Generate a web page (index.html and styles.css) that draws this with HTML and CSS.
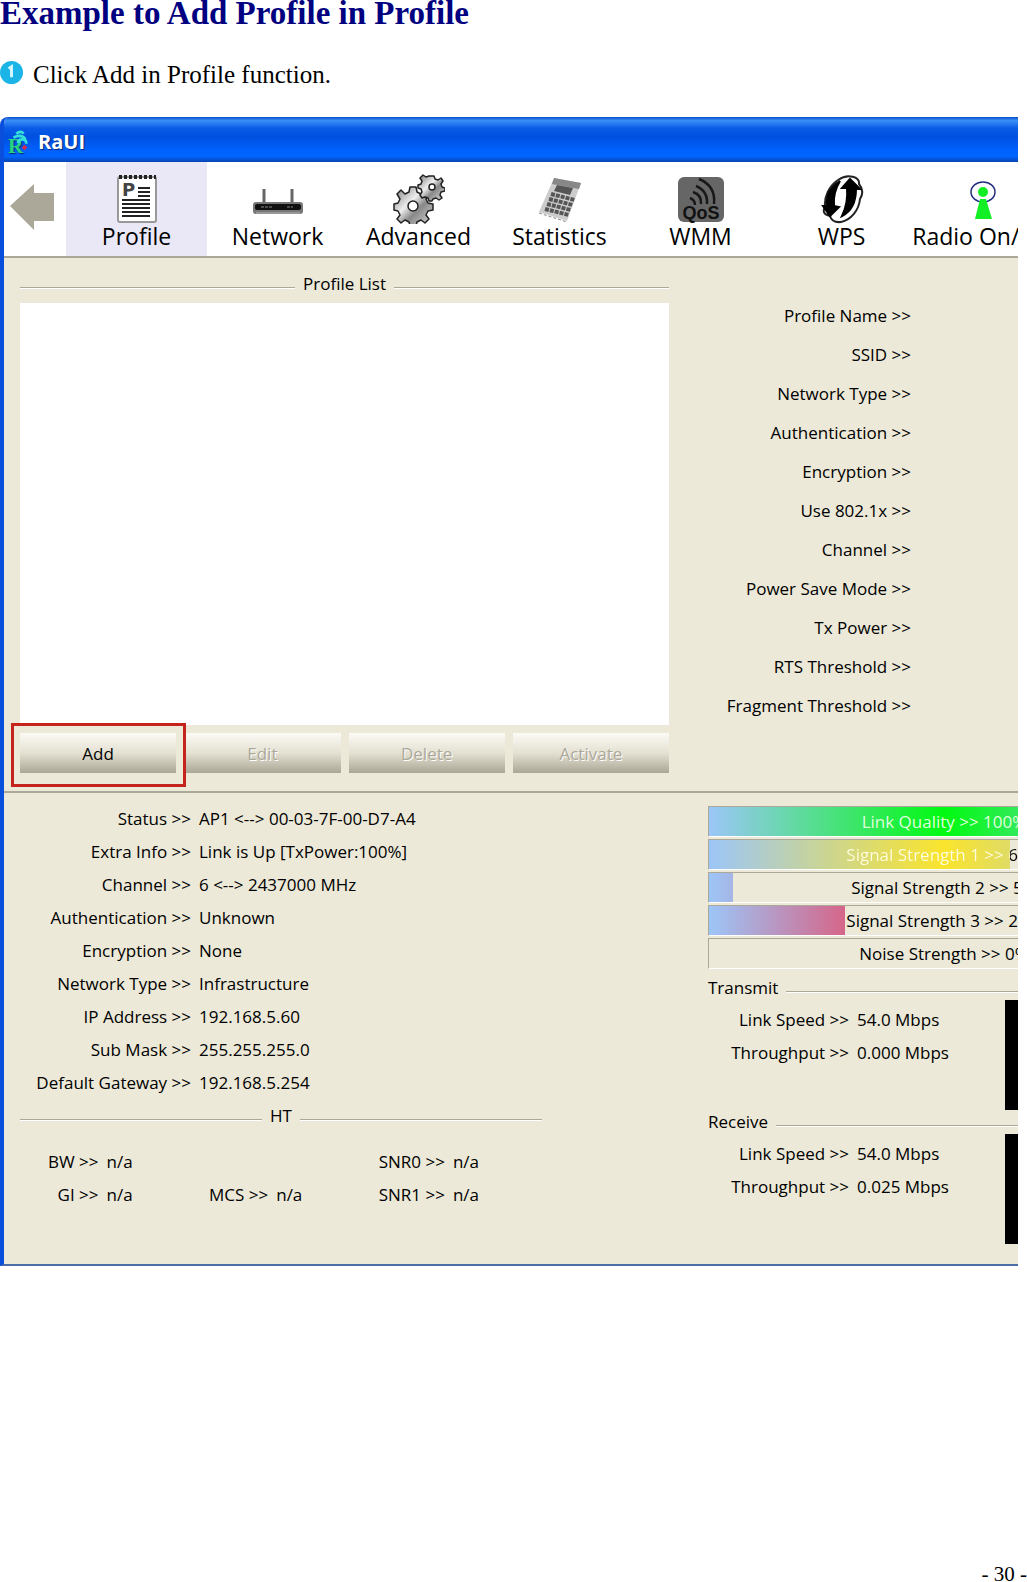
FILE: index.html
```html
<!DOCTYPE html>
<html lang="en">
<head>
  <meta charset="utf-8" />
  <meta name="viewport" content="width=device-width, initial-scale=1.0"/>
  <title>Example to Add Profile in Profile</title>
  <link rel="stylesheet" href="styles.css">
</head>
<body>

  <h1>Example to Add Profile in Profile</h1>

  <p class="step">
    <svg class="step-num" viewBox="0 0 24 24" aria-hidden="true">
      <circle cx="12" cy="12" r="12" fill="#1bb4e6"/>
      <path d="M9 8l3-2v11" fill="none" stroke="#d8f6ff" stroke-width="3"/>
    </svg>
    <span>Click Add in Profile function.</span>
  </p>

  <main class="window">
    <div class="titlebar">
      <svg class="logo" viewBox="0 0 24 26" aria-hidden="true">
        <text x="0" y="25" font-family="Liberation Serif, serif" font-weight="bold" font-size="23" fill="#28d484">R</text>
        <path d="M9 4q5-4 8 0M6 8q9-4 13 2M11 14q0-4 5-4 4 0 4 5" fill="none" stroke="#35e0d8" stroke-width="3"/>
        <path d="M15 19l3-3 3 3-3 3z" fill="#d62a4c"/>
      </svg>
      <span>RaUI</span>
    </div>

    <!-- Toolbar -->
    <nav class="toolbar">
      <button class="back" aria-label="Back">
        <svg width="44" height="46" viewBox="0 0 44 46"><path d="M0 22L24 0v9h20v28H24v9z" fill="#aca899"/></svg>
      </button>
      <button class="tab active">
        <svg viewBox="0 0 52 52" aria-hidden="true">
          <rect x="7" y="5" width="38" height="45" rx="2" fill="#fff" stroke="#999" stroke-width="2"/>
          <path d="M8 5h37" stroke="#222" stroke-width="4" stroke-dasharray="3 2"/>
          <text x="11" y="24" font-family="DejaVu Sans, sans-serif" font-weight="bold" font-size="18" fill="#444">P</text>
          <path d="M27 16h12M27 20h12M27 24h12M11 28h28M11 32h28M11 36h28M11 40h28M11 44h28" stroke="#222" stroke-width="2"/>
        </svg>
        <span>Profile</span>
      </button>
      <button class="tab">
        <svg viewBox="0 0 52 52" aria-hidden="true">
          <path d="M12 17v16M40 17v16" stroke="#666" stroke-width="3"/>
          <rect x="1" y="30" width="50" height="12" rx="3" fill="#777"/>
          <rect x="3" y="32" width="46" height="6" rx="2" fill="#111"/>
          <path d="M9 35h12M35 35h6" stroke="#888" stroke-width="1" stroke-dasharray="3 1"/>
          <path d="M4 41h44" stroke="#bbb"/>
        </svg>
        <span>Network</span>
      </button>
      <button class="tab">
        <svg viewBox="0 0 52 52" aria-hidden="true">
          <defs>
            <linearGradient id="steel" x1="0" y1="0" x2="1" y2="1">
              <stop offset="0" stop-color="#777"/><stop offset=".4" stop-color="#eee"/>
              <stop offset=".6" stop-color="#888"/><stop offset="1" stop-color="#ddd"/>
            </linearGradient>
          </defs>
          <g stroke="#222" stroke-width="1.5" fill="url(#steel)" stroke-linejoin="round">
            <path d="M17 15h6l1 5 4 2 4-4 4 4-3 5 2 4 5 1v6l-5 1-2 4 3 4-4 4-4-3-4 2-1 4h-6l-1-4-4-2-4 3-4-4 3-4-2-4-4-1v-6l4-1 2-4-3-5 4-4 4 4 4-2z"/>
            <circle cx="20" cy="34" r="5" fill="#fff"/>
            <path d="M37 4h4l1 3 3 1 3-2 2 3-2 3 1 3 3 1v3l-4 1-1 3 2 3-3 2-3-2-3 1-1 2h-3l-1-3-3-1-3 1-2-3 2-3-1-3-3-1v-3l3-1 1-3-2-3 3-3 3 2 3-1z"/>
            <circle cx="39" cy="15" r="3" fill="#fff"/>
          </g>
        </svg>
        <span>Advanced</span>
      </button>
      <button class="tab">
        <svg viewBox="0 0 52 52" aria-hidden="true">
          <path d="M20 6l27 5-14 38-28-9z" fill="#ccc"/>
          <path d="M20 6l27 5-2 6-27-5z" fill="#888"/>
          <path d="M23 13l16 3-3 7-16-4z" fill="#555"/>
          <path d="M17 22l24 6M15 27l24 6M13 32l24 6M11 37l24 6" stroke="#555" stroke-width="4" stroke-dasharray="4 1"/>
          <path d="M5 41l28 9" stroke="#888" stroke-dasharray="3 2"/>
        </svg>
        <span>Statistics</span>
      </button>
      <button class="tab">
        <svg viewBox="0 0 52 52" aria-hidden="true">
          <rect x="3" y="5" width="46" height="45" rx="6" fill="#666"/>
          <path d="M24 7q17 7 15 25M21 14q12 5 11 18M18 20q9 3 8 12M15 26q5 2 5 7" fill="none" stroke="#181818" stroke-width="2.5"/>
          <text x="26" y="47" text-anchor="middle" font-family="Liberation Sans, sans-serif" font-weight="bold" font-size="18" fill="#111">QoS</text>
        </svg>
        <span>WMM</span>
      </button>
      <button class="tab">
        <svg viewBox="0 0 52 52" aria-hidden="true">
          <path d="M22 8C32 1 44 5 43 12q6 7 1 15c-1 11-9 21-19 23q-9 1-11-6-9-2-5-9C8 25 13 14 22 8z" fill="#fff" stroke="#222" stroke-width="2"/>
          <path d="M24 9c-10 6-14 15-13 25H7l7 10 9-9-5-1c-1-10 1-17 6-25z" stroke="#000" stroke-width="2"/>
          <path d="M34 7l-8 9h5c1 11-1 20-5 28 10-5 14-15 14-27h4z" stroke="#000" stroke-width="2"/>
        </svg>
        <span>WPS</span>
      </button>
      <button class="tab">
        <svg viewBox="0 0 52 52" aria-hidden="true">
          <ellipse cx="26" cy="20" rx="12" ry="10" fill="none" stroke="#223080" stroke-width="1.5"/>
          <circle cx="26" cy="20" r="5" fill="#12ef24"/>
          <path d="M23 27h6l6 20H18z" fill="#12ef24"/>
        </svg>
        <span>Radio On/Off</span>
      </button>
    </nav>

    <!-- Profile page -->
    <section class="profile">
      <div class="list-side">
        <h2 class="rule">Profile List</h2>
        <div class="list-box"></div>
        <div class="buttons">
          <button class="marked">Add</button>
          <button disabled>Edit</button>
          <button disabled>Delete</button>
          <button disabled>Activate</button>
        </div>
      </div>
      <ul class="details">
        <li>Profile Name &gt;&gt;</li>
        <li>SSID &gt;&gt;</li>
        <li>Network Type &gt;&gt;</li>
        <li>Authentication &gt;&gt;</li>
        <li>Encryption &gt;&gt;</li>
        <li>Use 802.1x &gt;&gt;</li>
        <li>Channel &gt;&gt;</li>
        <li>Power Save Mode &gt;&gt;</li>
        <li>Tx Power &gt;&gt;</li>
        <li>RTS Threshold &gt;&gt;</li>
        <li>Fragment Threshold &gt;&gt;</li>
      </ul>
    </section>

    <!-- Link status -->
    <section class="status">
      <div class="info-side">
        <dl class="info">
          <dt>Status &gt;&gt;</dt><dd>AP1 &lt;--&gt; 00-03-7F-00-D7-A4</dd>
          <dt>Extra Info &gt;&gt;</dt><dd>Link is Up [TxPower:100%]</dd>
          <dt>Channel &gt;&gt;</dt><dd>6 &lt;--&gt; 2437000 MHz</dd>
          <dt>Authentication &gt;&gt;</dt><dd>Unknown</dd>
          <dt>Encryption &gt;&gt;</dt><dd>None</dd>
          <dt>Network Type &gt;&gt;</dt><dd>Infrastructure</dd>
          <dt>IP Address &gt;&gt;</dt><dd>192.168.5.60</dd>
          <dt>Sub Mask &gt;&gt;</dt><dd>255.255.255.0</dd>
          <dt>Default Gateway &gt;&gt;</dt><dd>192.168.5.254</dd>
        </dl>
        <h2 class="rule">HT</h2>
        <div class="ht">
          <dl>
            <dt>BW &gt;&gt;</dt><dd>n/a</dd>
            <dt>GI &gt;&gt;</dt><dd>n/a</dd>
          </dl>
          <dl>
            <dt>MCS &gt;&gt;</dt><dd>n/a</dd>
          </dl>
          <dl>
            <dt>SNR0 &gt;&gt;</dt><dd>n/a</dd>
            <dt>SNR1 &gt;&gt;</dt><dd>n/a</dd>
          </dl>
        </div>
      </div>

      <div class="link-side">
        <div class="meter good"><i style="width:100%"></i><span>Link Quality &gt;&gt; 100%</span></div>
        <div class="meter fair"><i style="width:64%"></i><span>Signal Strength 1 &gt;&gt; 64%</span></div>
        <div class="meter weak"><i style="width:5%"></i><span>Signal Strength 2 &gt;&gt; 5%</span></div>
        <div class="meter weak"><i style="width:29%"></i><span>Signal Strength 3 &gt;&gt; 29%</span></div>
        <div class="meter weak"><i style="width:0%"></i><span>Noise Strength &gt;&gt; 0%</span></div>

        <h2 class="rule start">Transmit</h2>
        <div class="traffic">
          <dl class="info">
            <dt>Link Speed &gt;&gt;</dt><dd>54.0 Mbps</dd>
            <dt>Throughput &gt;&gt;</dt><dd>0.000 Mbps</dd>
          </dl>
          <div class="graph"></div>
        </div>

        <h2 class="rule start">Receive</h2>
        <div class="traffic">
          <dl class="info">
            <dt>Link Speed &gt;&gt;</dt><dd>54.0 Mbps</dd>
            <dt>Throughput &gt;&gt;</dt><dd>0.025 Mbps</dd>
          </dl>
          <div class="graph"></div>
        </div>
      </div>
    </section>
  </main>

  <footer>- 30 -</footer>

</body>
</html>
```
FILE: styles.css
```css
:root {
  --face:  #ece9d8;
  --line:  #aca899;
  --blue:  #0a4fdc;
  --navy:  #000080;
}
*, *::before, *::after { box-sizing: border-box; margin: 0; padding: 0; }
body {
  font-family: "Liberation Serif", serif;
  background: #fff;
  color: #000;
  min-height: 100vh;
  display: flex;
  flex-direction: column;
  overflow-x: hidden;
}
h1 { font-size: 33px; line-height: 26px; color: var(--navy); }

.step {
  display: flex;
  align-items: center;
  gap: 10px;
  margin: 32px 0 25px;
  font-size: 25px;
  line-height: 34px;
}
.step-num { width: 23px; height: 23px; margin-bottom: 5px; }

.window {
  margin-right: 9px;
  overflow: hidden;
  border-left: 4px solid var(--blue);
  border-bottom: 2px solid #4d6da8;
  border-top-left-radius: 8px;
  background: var(--face);
  font-family: "Open Sans", sans-serif;
  font-size: 17px;
}
.window button { font: inherit; border: none; }

.titlebar {
  display: flex;
  align-items: center;
  gap: 8px;
  height: 45px;
  margin-left: -4px;
  padding: 4px 0 0 8px;
  background: linear-gradient(#0b50c8, #3b8ff8 8%, #0a5be6 25%, #0050e0 45%, #0062ff 75%, #0064fc 88%, #0a44b0);
  color: #fff;
  font-size: 20px;
  font-weight: bold;
  text-shadow: 1px 1px 1px #0a2a7a;
}
.logo { width: 22px; height: 26px; }

/* Toolbar */
.toolbar {
  display: flex;
  height: 96px;
  background: #fff;
  border-bottom: 2px solid var(--line);
}
.toolbar button { background: none; flex: none; }
.toolbar .back { width: 62px; padding-left: 6px; text-align: left; }
.toolbar .tab {
  width: 141px;
  display: flex;
  flex-direction: column;
  align-items: center;
  padding-top: 10px;
  font-size: 23px;
  line-height: 24px;
  white-space: nowrap;
}
.toolbar .active { background: #eae8f6; }
.tab svg { width: 52px; height: 52px; }

/* Etched headings */
.rule {
  display: flex;
  align-items: center;
  gap: 8px;
  font-size: inherit;
  font-weight: normal;
  line-height: 33px;
}
.rule::before, .rule::after {
  content: "";
  flex: 1;
  height: 2px;
  margin-top: 8px;
  background: var(--line);
  border-bottom: 1px solid #fff;
}
.rule.start { margin-top: 3px; line-height: 31px; }
.rule.start::before { display: none; }

/* Profile page */
.profile {
  display: flex;
  height: 535px;
  padding: 10px 0 0 16px;
  border-bottom: 2px solid var(--line);
}
.list-side { flex: 0 0 649px; }
.list-side .rule { margin-bottom: 4px; line-height: 31px; }
.list-box { height: 422px; background: #fff; }
.buttons { display: flex; gap: 8px; margin-top: 8px; }
.buttons button {
  position: relative;
  flex: 1;
  height: 40px;
  background: linear-gradient(#fbfaf5, #e4e1d2 50%, #aba797);
}
.buttons button:disabled { color: #aca899; text-shadow: 1px 1px 0 #fff; }
.marked::after {
  content: "";
  position: absolute;
  z-index: 1;
  inset: -10px -10px -14px -9px;
  border: 3px solid #c4241c;
}
.details {
  flex: 0 0 242px;
  margin-top: 28px;
  list-style: none;
  text-align: right;
  line-height: 39px;
}

/* Link status */
.status { display: flex; gap: 166px; height: 471px; padding: 9px 0 0 16px; }
.info-side { flex: 0 0 522px; }
.info, .ht dl {
  display: grid;
  grid-template-columns: 171px 1fr;
  column-gap: 8px;
  line-height: 33px;
}
dt { text-align: right; white-space: nowrap; }
dd { white-space: nowrap; }
.ht {
  display: flex;
  align-items: flex-end;
  justify-content: space-between;
  padding: 13px 63px 0 0;
}
.ht dl { grid-template-columns: auto auto; padding-left: 28px; }

/* Meters run past the edge of the window */
.link-side { flex: 0 0 472px; }
.meter {
  position: relative;
  height: 31px;
  margin-bottom: 2px;
  border: 1px solid;
  border-color: var(--line) #fff #fff var(--line);
  line-height: 30px;
  text-align: center;
}
.meter:first-child { margin-top: 4px; }
.meter i {
  position: absolute;
  inset: 0 auto 0 0;
  background: linear-gradient(90deg, #9cc6f8, var(--peak) 50%, #9cc6f8) 0 0 / 470px 100%;
}
.meter span { position: relative; display: block; }
.good { --peak: #00fa10; color: #dfffdc; }
.fair { --peak: #fae42c; }
.fair span {
  background: linear-gradient(90deg, #fffce0 64%, #000 64%);
  background-clip: text;
  -webkit-background-clip: text;
  color: transparent;
}
.weak { --peak: #ff2038; }

.traffic { display: flex; height: 100px; }
.traffic .info { flex: 0 0 297px; grid-template-columns: 141px 1fr; align-content: start; }
.graph { flex: 1; height: 110px; margin-top: -3px; background: #000; }

footer {
  margin-top: auto;
  text-align: right;
  font-size: 21px;
  line-height: 16px;
}
```
